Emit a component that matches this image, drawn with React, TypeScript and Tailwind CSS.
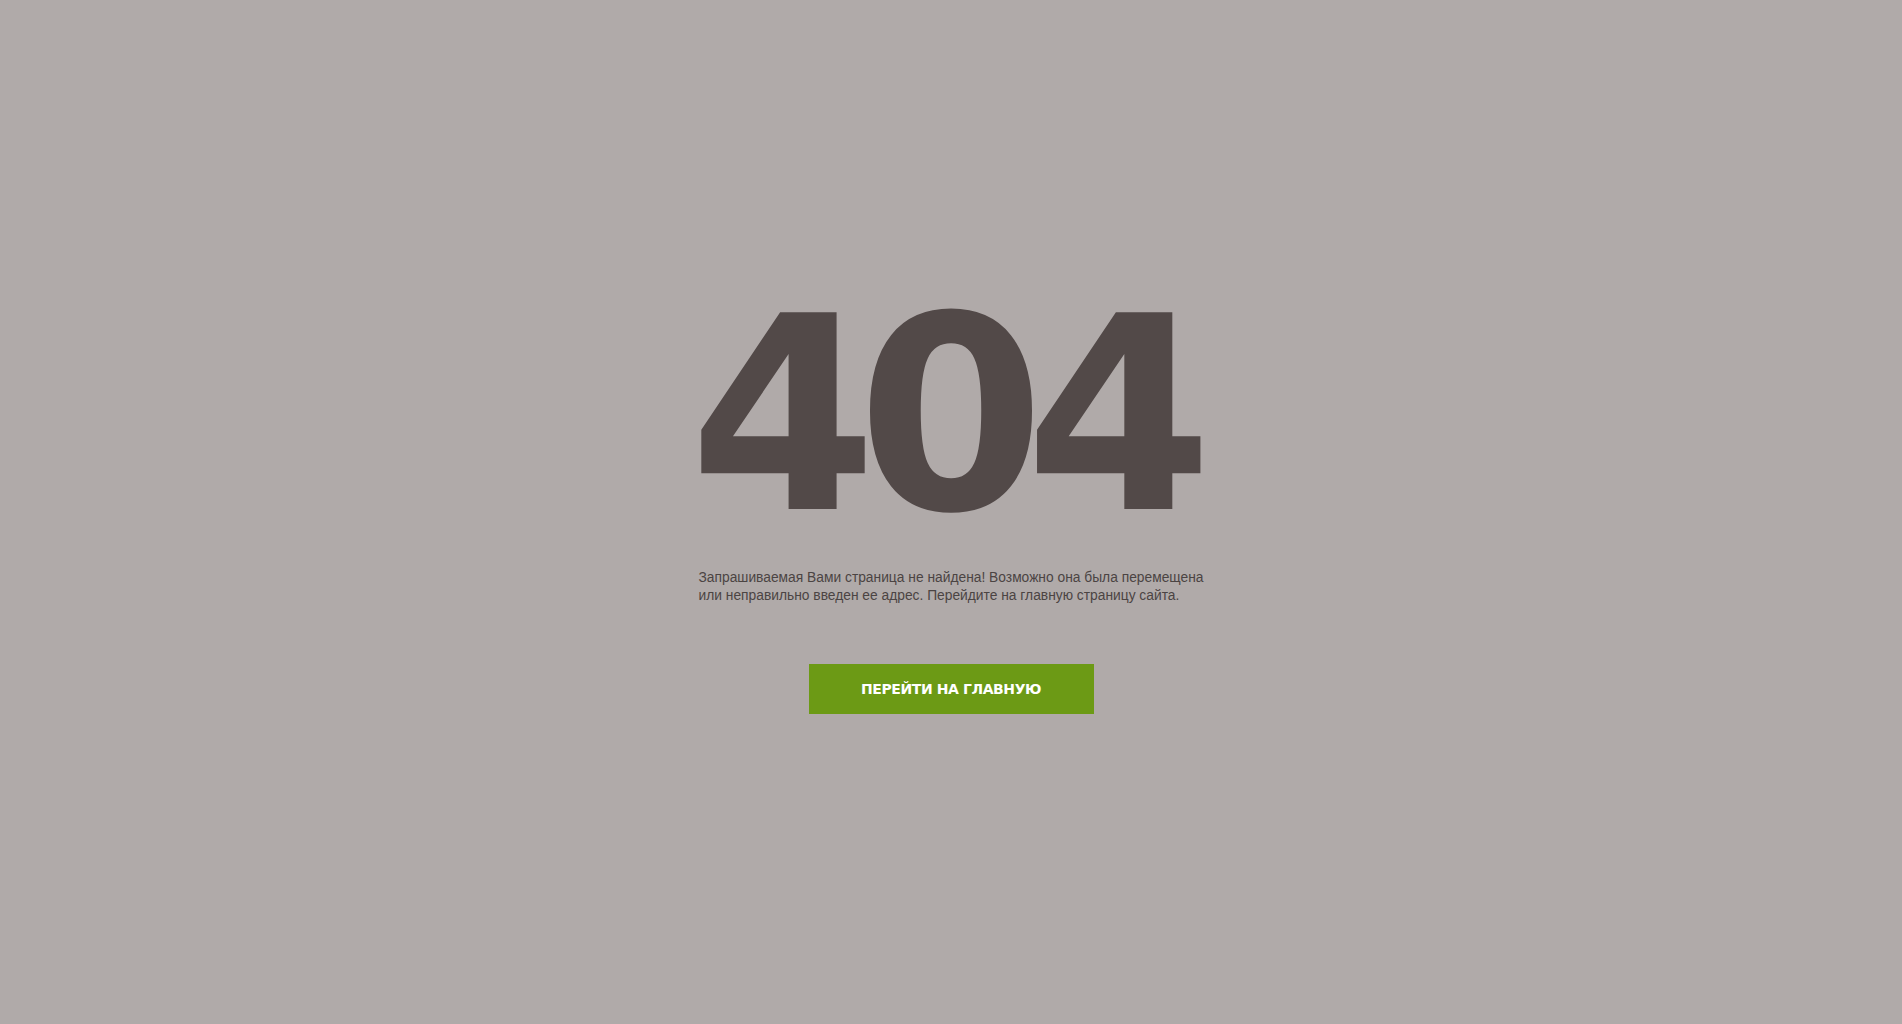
export default function App() {
  return (
    <div className="min-h-screen w-full bg-[#b0aaa9] flex flex-col items-center justify-center pb-[29px] font-['DejaVu_Sans',sans-serif]">
      <h1 className="ml-[-20px] text-[270px] leading-none font-bold tracking-[-20px] text-[#524948]">404</h1>
      <p className="mt-[18px] whitespace-nowrap font-['Liberation_Sans',sans-serif] text-[13.8px] leading-[18px] text-[#4b4443]">
        Запрашиваемая Вами страница не найдена! Возможно она была перемещена
        <br />
        или неправильно введен ее адрес. Перейдите на главную страницу сайта.
      </p>
      <a
        href="#"
        className="mt-[59px] flex h-[50px] w-[285px] items-center justify-center bg-[#6c9a15] text-[14px] font-bold tracking-[-0.4px] text-white uppercase"
      >
        Перейти на главную
      </a>
    </div>
  );
}
